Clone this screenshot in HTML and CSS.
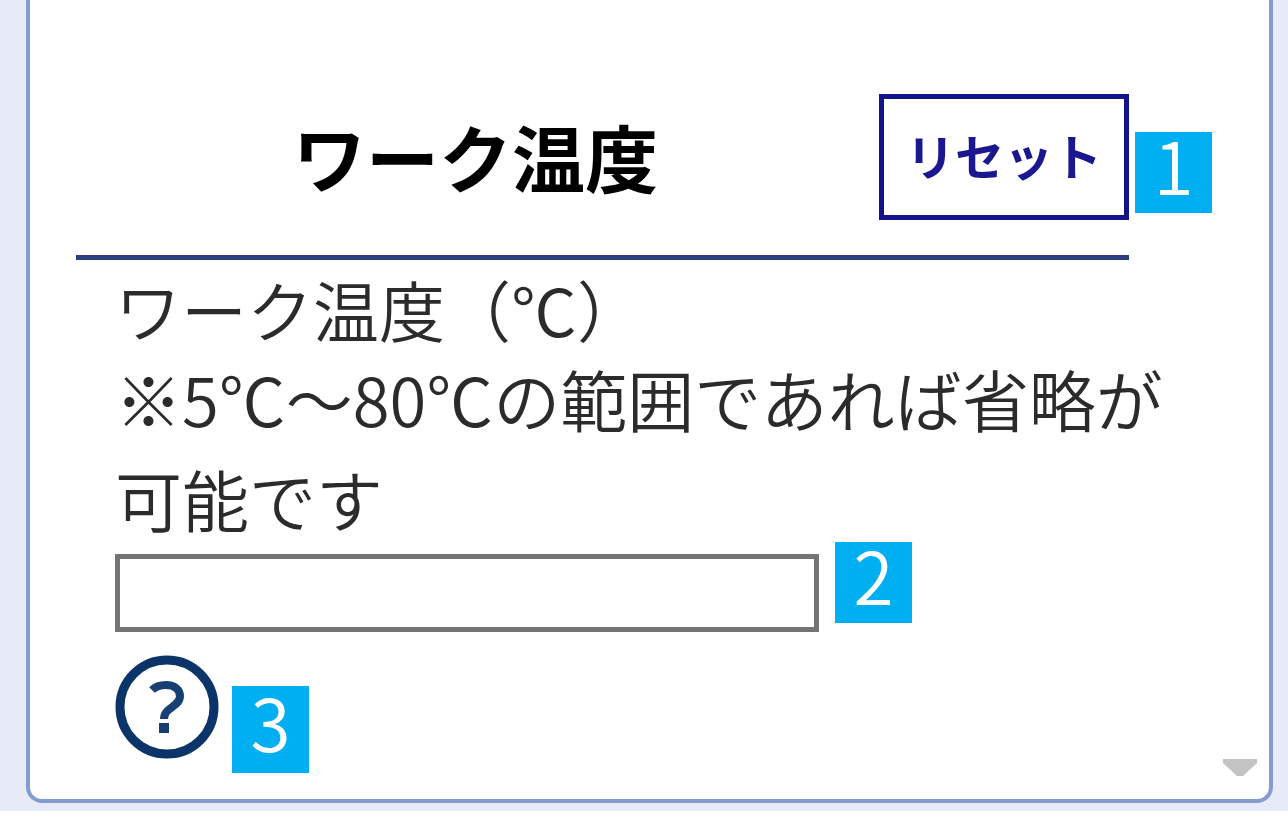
FILE: index.html
```html
<!DOCTYPE html>
<html lang="ja">
<head>
<meta charset="utf-8">
<title>ワーク温度</title>
<meta name="viewport" content="width=device-width, initial-scale=1">
<link rel="stylesheet" href="styles.css">
</head>
<body>
<main class="page">
  <section class="panel">
    <header class="panel-header">
      <h2 class="title">ワーク温度</h2>
      <div class="anchor">
        <button class="reset" type="button">リセット</button>
        <span class="badge badge-reset">1</span>
      </div>
    </header>
    <div class="field">
      <label class="label" for="work-temp">ワーク温度（℃）</label>
      <p class="note" id="temp-note">※5℃～80℃の範囲であれば省略が可能です</p>
      <div class="anchor input-row">
        <input class="input" id="work-temp" type="text" aria-describedby="temp-note">
        <span class="badge badge-input">2</span>
      </div>
      <div class="anchor help-row">
        <button class="help" type="button" aria-label="ヘルプ">
          <svg class="help-icon" viewBox="0 0 106 106" aria-hidden="true">
            <circle cx="52" cy="53" r="47" fill="none" stroke="#0b3468" stroke-width="9"/>
            <path d="M37 36C42 31 47 31 51 31C60 31 65 36 65 42C65 53 49 53 49 65" fill="none" stroke="#173f73" stroke-width="8"/>
            <rect x="44" y="69" width="10" height="10" fill="#173f73"/>
          </svg>
        </button>
        <span class="badge badge-help">3</span>
      </div>
    </div>
    <svg class="scroll-arrow" viewBox="0 0 34 18" aria-hidden="true"><path d="M0 0H34V4L20 17H14L0 4Z" fill="#c3c3c3"/></svg>
  </section>
</main>
</body>
</html>
```
FILE: styles.css
```css
* { box-sizing: border-box; }

body {
  margin: 0;
  background: #fff;
  color: #2b2b2b;
  font-family: "Noto Sans CJK JP", sans-serif;
}

.page {
  padding: 0 15px 8px 26px;
  background: #e7ebf8;
}

.panel {
  position: relative;
  padding: 94px 46px 39px;
  border: 4px solid #859ccf;
  border-top: 0;
  border-radius: 0 0 16px 16px;
  background: #fff;
}

.panel-header {
  display: flex;
  align-items: flex-start;
  margin-right: 94px;
  padding-bottom: 35px;
  border-bottom: 5px solid #2b3c80;
}

.title {
  flex: 1;
  margin: 0;
  padding-right: 4px;
  color: #000;
  font-size: 73px;
  font-weight: 700;
  line-height: 122px;
  text-align: center;
}

.anchor { position: relative; }

.reset {
  display: block;
  width: 250px;
  height: 126px;
  padding: 0 0 6px;
  border: 5px solid #13138a;
  background: #fff;
  color: #1b1790;
  font-family: inherit;
  font-size: 49px;
  font-weight: 700;
}

.field { padding: 8px 0 0 39px; }

.label {
  display: block;
  font-size: 66px;
  font-weight: 350;
  line-height: 80px;
}

.note {
  margin: 0;
  font-size: 67px;
  font-weight: 350;
  line-height: 100px;
}

.input-row {
  width: 704px;
  max-width: 100%;
  margin-top: 6px;
}

.input {
  display: block;
  width: 100%;
  height: 78px;
  padding: 0 12px;
  border: 5px solid #747474;
  border-radius: 0;
  background: #fff;
  font-family: inherit;
  font-size: 48px;
}

.help-row {
  width: 106px;
  margin-top: 22px;
}

.help {
  display: block;
  width: 106px;
  height: 106px;
  padding: 0;
  border: 0;
  background: none;
}

.help-icon { display: block; width: 100%; }

.badge {
  position: absolute;
  width: 77px;
  height: 81px;
  background: #00aff1;
  color: #fff;
  font-size: 73px;
  font-weight: 350;
  line-height: 62px;
  text-align: center;
}

.badge-reset { top: 38px; left: 256px; }
.badge-input { top: -12px; left: 720px; }
.badge-help { top: 32px; left: 117px; height: 87px; line-height: 68px; }

.scroll-arrow {
  position: absolute;
  right: 12px;
  bottom: 22px;
  width: 34px;
  height: 18px;
}
```
